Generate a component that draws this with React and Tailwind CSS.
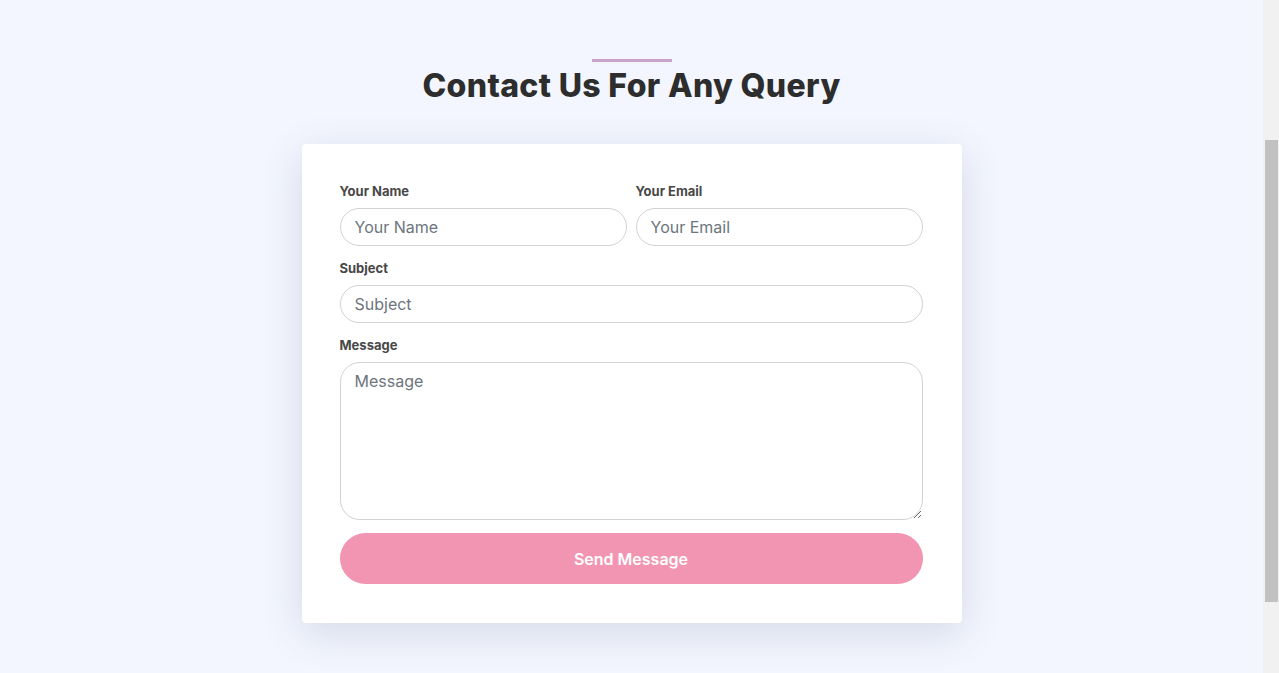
import React from "react";

export default function App() {
  const font = { fontFamily: "Inter, 'Open Sans', sans-serif" };

  const inputCls =
    "h-[38px] rounded-full border border-[#d2d2d2] px-[14px] text-[16px] text-[#444] placeholder:text-[#6c757d] outline-none bg-white";
  const labelCls = "text-[13px] leading-5 font-bold text-[#484848] mb-[7px]";

  return (
    <div className="h-[673px] flex bg-[#f3f6fe] overflow-hidden" style={font}>
      <main className="flex-1 pt-[59px] flex flex-col items-center">
        <div className="w-20 h-[3px] bg-[#c9a3c9]" />
        <h1 className="mt-[4px] text-[32px] leading-10 font-extrabold text-[#2d2d2d] tracking-[0.35px]">
          Contact Us For Any Query
        </h1>
        <div className="mt-[38px] w-[660px] bg-white rounded-[4px] shadow-[0_10px_40px_rgba(60,70,120,0.16)] pl-[38px] pr-[39px] pt-[37px] pb-[39px]">
          <div className="grid grid-cols-2 gap-x-[9px]">
            <div className="flex flex-col">
              <label className={labelCls}>Your Name</label>
              <input placeholder="Your Name" className={inputCls} />
            </div>
            <div className="flex flex-col">
              <label className={labelCls}>Your Email</label>
              <input placeholder="Your Email" className={inputCls} />
            </div>
          </div>
          <div className="flex flex-col mt-[12px]">
            <label className={labelCls}>Subject</label>
            <input placeholder="Subject" className={inputCls} />
          </div>
          <div className="flex flex-col mt-[12px]">
            <label className={labelCls}>Message</label>
            <textarea
              placeholder="Message"
              className="h-[158px] rounded-[20px] border border-[#d2d2d2] px-[14px] py-[6px] text-[16px] leading-6 text-[#444] placeholder:text-[#6c757d] outline-none bg-white"
            />
          </div>
          <button className="mt-[13px] w-full h-[51px] rounded-full bg-[#f195b2] text-white text-[16px] font-semibold">
            Send Message
          </button>
        </div>
      </main>
      <div className="w-[16px] bg-[#f1f1f1] pl-[2px] pr-[1px] pt-[140px] flex flex-col">
        <div className="h-[462px] bg-[#c1c1c1]" />
      </div>
    </div>
  );
}
